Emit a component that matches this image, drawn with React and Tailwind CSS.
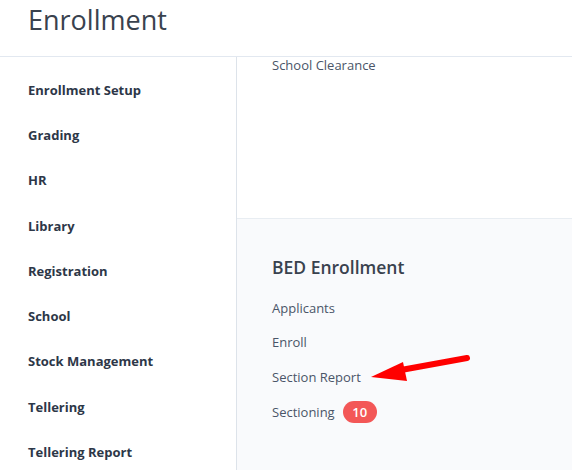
import React from 'react';

const modules = [
  'Enrollment Setup',
  'Grading',
  'HR',
  'Library',
  'Registration',
  'School',
  'Stock Management',
  'Tellering',
  'Tellering Report',
];

const bedLinks = ['Applicants', 'Enroll', 'Section Report', 'Sectioning'];

const Arrow = () => (
  <svg className="absolute left-[360px] top-[340px]" width="120" height="50" viewBox="0 0 120 50">
    {/* shaft */}
    <line x1="30" y1="32" x2="107" y2="18" stroke="#ff0000" strokeWidth="6" strokeLinecap="round" />
    {/* head */}
    <polygon points="11,37 43,22 47,41" fill="#ff0000" />
  </svg>
);

export default function App() {
  return (
    <div className="relative h-[470px] w-[572px] overflow-hidden bg-white" style={{ fontFamily: '"Open Sans", sans-serif' }}>
      {/* header */}
      <div className="h-[57px] border-b border-[#e2e8f0] pl-[28px]">
        <h1 className="pt-[2px] text-[27px] font-medium leading-[36px] text-[#39424e]">Enrollment</h1>
      </div>

      <div className="flex">
        {/* sidebar */}
        <div className="w-[237px] shrink-0 border-r border-[#dde3ea] pt-[11px]">
          {modules.map((m) => (
            <div key={m} className="flex h-[45.25px] items-center pl-[28px] text-[13px] font-bold text-[#2d3748]">
              {m}
            </div>
          ))}
        </div>

        {/* content */}
        <div className="flex-1">
          <div className="h-[162px] border-b border-[#e8edf2] pl-[35px]">
            <div className="text-[13px] leading-[16px] text-[#4a5568]">School Clearance</div>
          </div>
          <div className="h-[260px] bg-[#f9fafc] pl-[35px] pt-[35px]">
            <h2 className="text-[17.5px] font-semibold leading-[26px] text-[#39424e]">BED Enrollment</h2>
            <div className="mt-[11px] flex flex-col">
              {bedLinks.map((l) => (
                <div key={l} className="flex h-[34.7px] items-center gap-[8px] text-[13px] text-[#4a5568]">
                  <span>{l}</span>
                  {l === 'Sectioning' && (
                    <span className="flex h-[22px] w-[34px] items-center justify-center rounded-full bg-[#f35757] text-[13px] font-semibold text-white">
                      10
                    </span>
                  )}
                </div>
              ))}
            </div>
          </div>
        </div>
      </div>

      <Arrow />
    </div>
  );
}
